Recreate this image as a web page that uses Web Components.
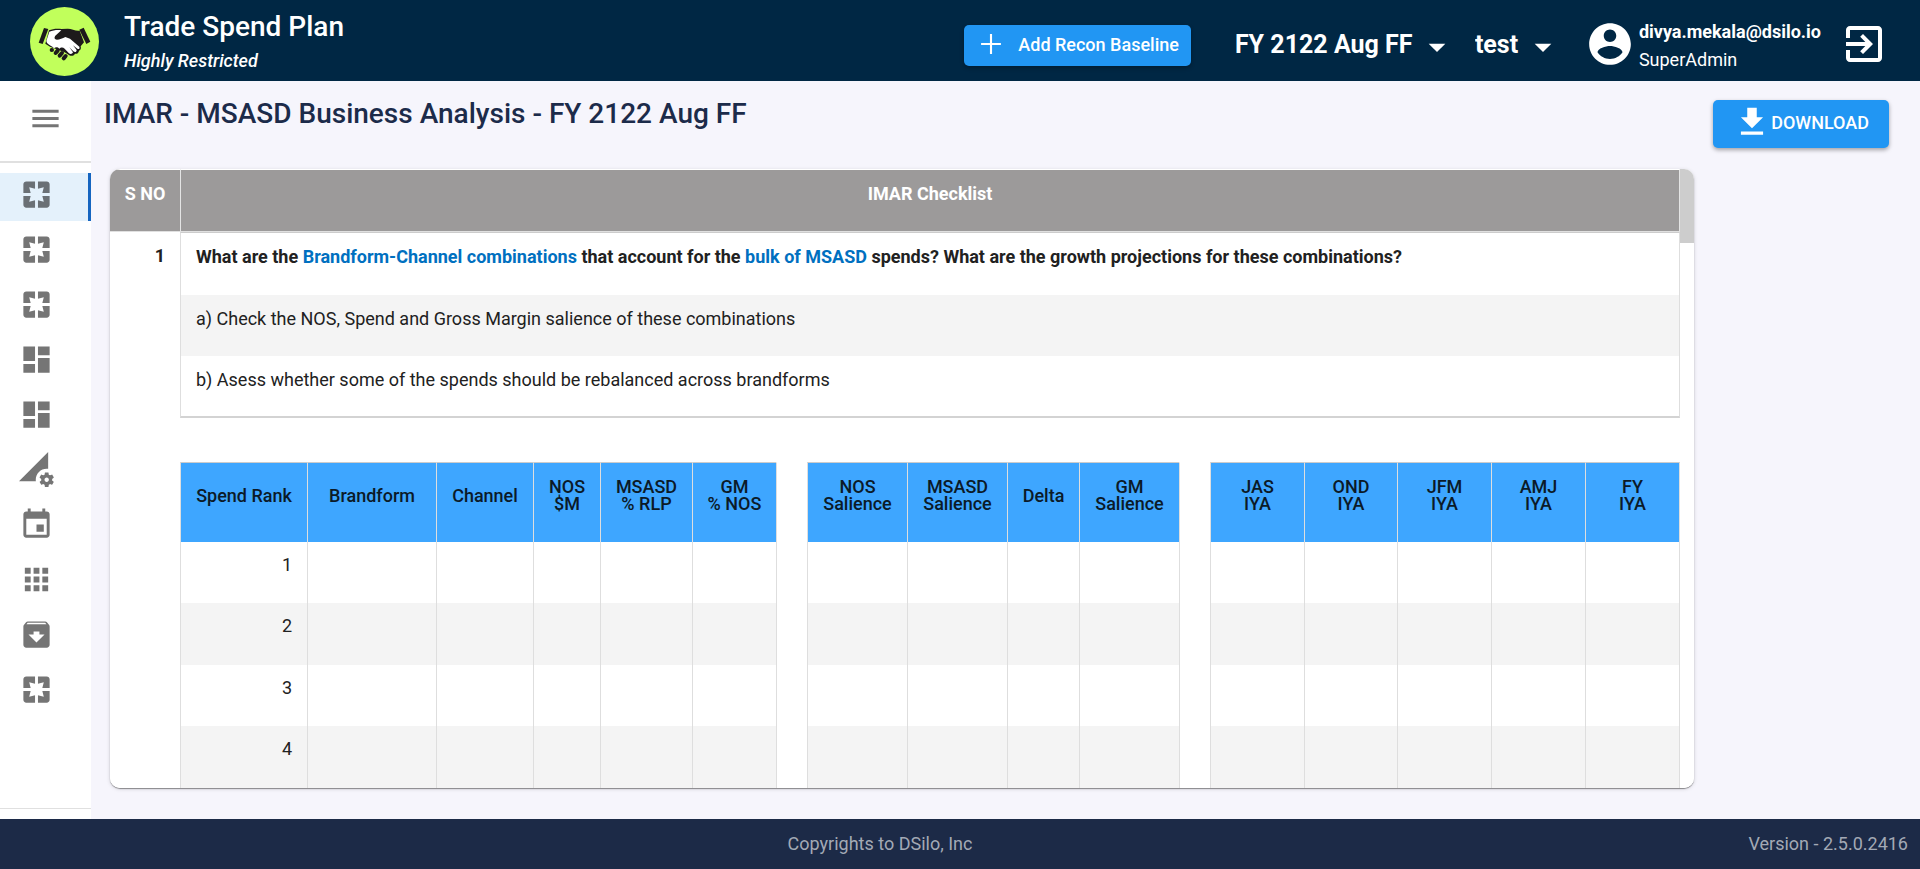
<!DOCTYPE html>
<html lang="en">
<head>
<meta charset="utf-8">
<meta name="viewport" content="width=device-width, initial-scale=1">
<title>Trade Spend Plan</title>
<style>
  html, body { margin: 0; height: 100%; }
  body { font-family: Roboto, "Liberation Sans", sans-serif; font-size: 18px; line-height: 20px; color: #212121; }
</style>
</head>
<body>
<app-shell>
  <app-header slot="header" heading="Trade Spend Plan" note="Highly Restricted"></app-header>
  <side-nav slot="nav"></side-nav>
  <page-bar slot="bar" heading="IMAR - MSASD Business Analysis - FY 2122 Aug FF"></page-bar>
  <scroll-card slot="content"><imar-table></imar-table></scroll-card>
  <app-footer slot="footer">
    <span>Copyrights to DSilo, Inc</span>
    <span slot="end">Version - 2.5.0.2416</span>
  </app-footer>
</app-shell>

<script>
const define = (name, html, setup) => {
  const tpl = document.createElement('template');
  tpl.innerHTML = html;
  customElements.define(name, class extends HTMLElement {
    constructor() {
      super();
      this.attachShadow({ mode: 'open' }).append(tpl.content.cloneNode(true));
    }
    connectedCallback() { if (setup) setup(this, this.shadowRoot); }
  });
};

const ICONS = {
  menu: 'M3 18h18v-2H3v2zm0-5h18v-2H3v2zm0-7v2h18V6H3z',
  pages: 'M3 5v6h5L7 7l4 1V3H5c-1.1 0-2 .9-2 2zm5 8H3v6c0 1.1.9 2 2 2h6v-5l-4 1 1-4zm9 4l-4-1v5h6c1.1 0 2-.9 2-2v-6h-5l1 4zm2-14h-6v5l4-1-1 4h5V5c0-1.1-.9-2-2-2z',
  dashboard: 'M3 13h8V3H3v10zm0 8h8v-6H3v6zm10 0h8V11h-8v10zm0-18v6h8V3h-8z',
  network: 'M18.99 11.5c.34 0 .67.03 1 .07L20 0 0 20h11.56c-.04-.33-.07-.66-.07-1 0-4.14 3.36-7.5 7.5-7.5zm3.71 7.99c.02-.16.04-.32.04-.49 0-.17-.01-.33-.04-.49l1.06-.83c.09-.08.12-.21.06-.32l-1-1.73c-.06-.11-.19-.15-.31-.11l-1.24.5c-.26-.2-.54-.37-.85-.49l-.19-1.32c-.01-.12-.12-.21-.24-.21h-2c-.12 0-.23.09-.25.21l-.19 1.32c-.3.13-.59.29-.85.49l-1.24-.5c-.11-.04-.24 0-.31.11l-1 1.73c-.06.11-.04.24.06.32l1.06.83c-.02.16-.03.32-.03.49 0 .17.01.33.03.49l-1.06.83c-.09.08-.12.21-.06.32l1 1.73c.06.11.19.15.31.11l1.24-.5c.26.2.54.37.85.49l.19 1.32c.02.12.12.21.25.21h2c.12 0 .23-.09.25-.21l.19-1.32c.3-.13.59-.29.84-.49l1.25.5c.11.04.24 0 .31-.11l1-1.73c.06-.11.03-.24-.06-.32l-1.07-.83zm-3.71 1.01c-.83 0-1.5-.67-1.5-1.5s.67-1.5 1.5-1.5 1.5.67 1.5 1.5-.67 1.5-1.5 1.5z',
  event: 'M17 12h-5v5h5v-5zM16 1v2H8V1H6v2H5c-1.11 0-1.99.9-1.99 2L3 19c0 1.1.89 2 2 2h14c1.1 0 2-.9 2-2V5c0-1.1-.9-2-2-2h-1V1h-2zm3 18H5V8h14v11z',
  apps: 'M4 8h4V4H4v4zm6 12h4v-4h-4v4zm-6 0h4v-4H4v4zm0-6h4v-4H4v4zm6 0h4v-4h-4v4zm6-10v4h4V4h-4zm-6 4h4V4h-4v4zm6 6h4v-4h-4v4zm0 6h4v-4h-4v4z',
  archive: 'M20.54 5.23l-1.39-1.68C18.88 3.21 18.47 3 18 3H6c-.47 0-.88.21-1.16.55L3.46 5.23C3.17 5.57 3 6.02 3 6.5V19c0 1.1.9 2 2 2h14c1.1 0 2-.9 2-2V6.5c0-.48-.17-.93-.46-1.27zM12 17.5L6.5 12H10v-2h4v2h3.5L12 17.5zM5.12 5l.81-1h12l.94 1H5.12z',
  plus: 'M19 12.75h-6.25V19h-1.5v-6.25H5v-1.5h6.25V5h1.5v6.25H19z',
  download: 'M19 9h-4V3H9v6H5l7 7 7-7zM5 18v2h14v-2H5z',
  account: 'M12 2C6.48 2 2 6.48 2 12s4.48 10 10 10 10-4.48 10-10S17.52 2 12 2zm0 3c1.66 0 3 1.34 3 3s-1.34 3-3 3-3-1.34-3-3 1.34-3 3-3zm0 14.2c-2.5 0-4.71-1.28-6-3.22.03-1.99 4-3.08 6-3.08 1.99 0 5.97 1.09 6 3.08-1.29 1.94-3.5 3.22-6 3.22z',
  exit: 'M10.09 15.59L11.5 17l5-5-5-5-1.41 1.41L12.67 11H3v2h9.67l-2.58 2.59zM19 3H5c-1.11 0-2 .9-2 2v4h2V5h14v14H5v-4H3v4c0 1.1.89 2 2 2h14c1.1 0 2-.9 2-2V5c0-1.1-.9-2-2-2z',
  caret: 'M7 10l5 5 5-5z'
};

define('mat-icon', `
  <style>
    :host { display: block; flex: none; width: var(--icon-size, 35px); height: var(--icon-size, 35px); }
    svg { display: block; width: 100%; height: 100%; fill: currentColor; }
  </style>
  <svg viewBox="0 0 24 24" aria-hidden="true"><path/></svg>`,
  (el, root) => root.querySelector('path').setAttribute('d', ICONS[el.getAttribute('name')]));

define('brand-logo', `
  <style>
    :host { display: block; flex: none; width: 69px; height: 69px; }
    svg { display: block; width: 100%; height: 100%; }
  </style>
  <svg viewBox="0 0 207 207" role="img" aria-label="Handshake">
    <circle cx="103.500" cy="103.500" r="103.500" fill="#c1ff5b"/>
    <g fill="#1d1a1b">
      <path d="M42 63l13 3-17 45-12-4z"/>
      <path d="M148 68l13-6 20 42-12 7z"/>
      <path d="M57 70C68 66 78 64 95 66L112 65C124 64 138 74 149 71L162 106L152 118C154 124 152 130 147 131C146 138 141 142 135 140C131 147 124 148 118 145L104 136L60 119L46 110Z"/>
      <g stroke="#1d1a1b" stroke-width="12" stroke-linecap="round">
        <path d="M65 129h1M77 138l6-7M89 146l7-8M101 154l6-7"/>
      </g>
    </g>
    <path fill="#fff" d="M58 74C70 70 82 68 94 70L76 86C72 92 73 97 81 98C89 98 98 94 106 90L120 95L148 119C150 124 147 128 142 125L129 115L140 129C140 135 135 137 130 133L118 121L129 136C126 143 120 142 116 138L104 125C98 119 92 121 88 125C82 119 77 120 72 124C66 116 58 116 51 108L49 102Z"/>
  </svg>`);

define('pick-list', `
  <style>
    :host { display: flex; align-items: center; color: #fff; }
    select { appearance: none; border: 0; margin: 0; padding: 0 40px 0 0; background: none; color: inherit;
             font: 700 25px/32px Roboto, sans-serif; cursor: pointer; }
    option { color: #212121; }
    mat-icon { --icon-size: 40px; margin: 4px -12px 0 -36px; pointer-events: none; }
  </style>
  <select></select><mat-icon name="caret"></mat-icon>`,
  (el, root) => {
    const sel = root.querySelector('select');
    sel.setAttribute('aria-label', el.getAttribute('label'));
    sel.add(new Option(el.getAttribute('value')));
  });

define('app-header', `
  <style>
    :host { display: flex; align-items: center; justify-content: space-between; box-sizing: border-box;
            height: 81px; padding: 0 32px 0 30px; background: #002744; color: #fff; }
    .brand, .tools, .user { display: flex; align-items: center; }
    .brand { gap: 25px; padding-top: 2px; }
    h1 { margin: 0; font-size: 28px; line-height: 36px; font-weight: 500; }
    p { margin: 2px 0 0; font-style: italic; font-weight: 500; line-height: 28px; }
    .add { display: flex; align-items: center; gap: 10px; height: 41px; padding: 0 12px 2px 10px; border: 0; border-radius: 5px;
           margin: 10px 44px 0 0; background: #2196f3; color: #fff; font: 500 18px/20px Roboto, sans-serif;
           box-shadow: 0 2px 4px rgba(0,0,0,.3); cursor: pointer; }
    .add mat-icon { --icon-size: 34px; margin-bottom: 2px; }
    pick-list { margin: 8px 30px 0 0; }
    .user { --icon-size: 50px; gap: 4px; margin: 6px 19px 0 4px; }
    .user div { padding-top: 4px; }
    .user b, .user span { display: block; line-height: 28px; }
    .out { --icon-size: 48px; padding: 0; border: 0; margin-top: 6px; background: none; color: inherit; cursor: pointer; }
  </style>
  <div class="brand">
    <brand-logo></brand-logo>
    <div><h1></h1><p></p></div>
  </div>
  <div class="tools">
    <button class="add" type="button"><mat-icon name="plus"></mat-icon>Add Recon Baseline</button>
    <pick-list label="Plan" value="FY 2122 Aug FF"></pick-list>
    <pick-list label="Scenario" value="test"></pick-list>
    <div class="user"><mat-icon name="account"></mat-icon><div><b>divya.mekala@dsilo.io</b><span>SuperAdmin</span></div></div>
    <button class="out" type="button" aria-label="Sign out"><mat-icon name="exit"></mat-icon></button>
  </div>`,
  (el, root) => {
    root.querySelector('h1').textContent = el.getAttribute('heading');
    root.querySelector('p').textContent = el.getAttribute('note');
  });

define('side-nav', `
  <style>
    :host { display: flex; flex-direction: column; box-sizing: border-box; height: 100%; background: #fff; color: #757575; }
    .menu { display: flex; align-items: center; justify-content: center; box-sizing: content-box; height: 74px; padding: 0 0 6px;
            border: 0; border-bottom: 2px solid #e0e0e0; background: none; color: inherit; cursor: pointer; }
    nav { display: flex; flex-direction: column; gap: 7px; padding-top: 10px; flex: 1; border-bottom: 1px solid #e0e0e0; margin-bottom: 10px; }
    a { display: flex; align-items: center; box-sizing: border-box; height: 48px; padding: 0 0 5px 19px; color: inherit; }
    a.on { background: #e4f1fb; border-right: 3px solid #1565c0; color: #6a7075; }
  </style>
  <button class="menu" type="button" aria-label="Menu"><mat-icon name="menu"></mat-icon></button>
  <nav aria-label="Sections"></nav>`,
  (el, root) => {
    const items = ['pages', 'pages', 'pages', 'dashboard', 'dashboard', 'network', 'event', 'apps', 'archive', 'pages'];
    root.querySelector('nav').innerHTML = items.map((n, i) =>
      `<a href="#s${i + 1}" class="${i ? '' : 'on'}" aria-label="Section ${i + 1}"><mat-icon name="${n}"></mat-icon></a>`).join('');
  });

define('page-bar', `
  <style>
    :host { display: flex; align-items: flex-start; justify-content: space-between; padding: 15px 31px 21px 13px; }
    h2 { margin: 0; font-size: 28px; line-height: 36px; font-weight: 500; color: #1c2b4a; }
    button { display: flex; align-items: center; height: 48px; margin-top: 4px; padding: 0 20px 2px; border: 0; border-radius: 5px;
             background: #2196f3; color: #fff; font: 500 18px/20px Roboto, sans-serif; box-shadow: 0 2px 4px rgba(0,0,0,.35); cursor: pointer; }
    mat-icon { --icon-size: 38px; margin-bottom: 2px; }
  </style>
  <h2></h2>
  <button type="button"><mat-icon name="download"></mat-icon>DOWNLOAD</button>`,
  (el, root) => { root.querySelector('h2').textContent = el.getAttribute('heading'); });

define('scroll-card', `
  <style>
    :host { display: flex; min-height: 0; margin: 0 226px 31px 19px; overflow: hidden; border-radius: 10px; background: #fff;
            box-shadow: 0 1px 1px rgba(0,0,0,.4), 0 1px 4px rgba(0,0,0,.14); }
    .view { flex: 1; min-width: 0; overflow: auto; scrollbar-width: none; }
    .track { width: 14px; background: #fff; }
    .thumb { height: 12%; background: #cdcdcd; }
  </style>
  <div class="view"><slot></slot></div>
  <div class="track"><div class="thumb"></div></div>`);

define('imar-table', `
  <style>
    :host { display: block; --line: #dedede; }
    table { width: 100%; table-layout: fixed; border-collapse: separate; border-spacing: 0; }
    th, td { box-sizing: border-box; padding: 14px 15px 0; vertical-align: top; text-align: left; line-height: 20px; font-weight: 400; }
    .top th { height: 63px; padding: 14px 0 0; border-top: 1px solid #fff; border-bottom: 1px solid #e0e0e0; background: #9c9a9a; color: #fff;
              font-weight: 700; text-align: center; white-space: nowrap; }
    .q { height: 61px; border-left: 1px solid var(--line); border-right: 1px solid var(--line); }
    th.q { height: 63px; border-top: 1px solid #ccc; font-weight: 700; }
    .q span { color: #0070c0; }
    .alt { background: #f4f4f4; }
    td.end { height: 62px; border-bottom: 2px solid #d3d3d3; }
    .no { text-align: right; font-weight: 700; }
    .gap td { height: 44px; }
    .cols th { height: 80px; padding: 0 0 15px; vertical-align: middle; text-align: center; line-height: 17px; font-weight: 500;
               background: #3ea6ff; color: #0b1a28; border-top: 1px solid #ccc; }
    .cols th, .row td, .row th { border-left: 1px solid var(--line); }
    .row td, .row th { height: 61px; padding-top: 13px; }
    .row:nth-child(odd) td { height: 62px; }
    .row th { text-align: right; }
    .cols .blank, .row .blank { background: #fff; border-top-color: transparent; }
    .cols .lead, .row .lead { background: #fff; border: 0; }
    tr > .last { border-right: 1px solid var(--line); }
    .top th + th { border-left: 1px solid #e4e4e4; border-right: 1px solid #e4e4e4; }
  </style>
  <table>
    <colgroup></colgroup>
    <thead><tr class="top"><th scope="col">S NO</th><th scope="col" colspan="17">IMAR Checklist</th></tr></thead>
    <tbody>
      <tr><td class="no" rowspan="3">1</td><th class="q" colspan="17">What are the <span>Brandform-Channel combinations</span> that account for the <span>bulk of MSASD</span> spends? What are the growth projections for these combinations?</th></tr>
      <tr><td class="q alt" colspan="17">a) Check the NOS, Spend and Gross Margin salience of these combinations</td></tr>
      <tr><td class="q end" colspan="17">b) Asess whether some of the spends should be rebalanced across brandforms</td></tr>
      <tr class="gap"><td colspan="18"></td></tr>
    </tbody>
    <tbody class="data"></tbody>
  </table>`,
  (el, root) => {
    // Column weights; an empty label is the gutter between two groups.
    const cols = [['Spend Rank', 127], ['Brandform', 129], ['Channel', 97], ['NOS<br>$M', 67], ['MSASD<br>% RLP', 92], ['GM<br>% NOS', 84],
      ['', 31], ['NOS<br>Salience', 100], ['MSASD<br>Salience', 100], ['Delta', 72], ['GM<br>Salience', 100],
      ['', 31], ['JAS<br>IYA', 94], ['OND<br>IYA', 93], ['JFM<br>IYA', 94], ['AMJ<br>IYA', 94], ['FY<br>IYA', 95]];
    const last = cols.length - 1;
    const cls = (c, i, alt) => c[0] ? (alt ? 'alt ' : '') + (i === last ? 'last' : '') : 'blank';
    root.querySelector('colgroup').innerHTML = [['', 70], ...cols].map(c => `<col style="width:${c[1]}px">`).join('');
    const head = `<tr class="cols"><td class="lead"></td>${cols.map((c, i) =>
      c[0] ? `<th scope="col" class="${cls(c, i)}">${c[0]}</th>` : '<th class="blank"></th>').join('')}</tr>`;
    const rows = [1, 2, 3, 4].map(n => `<tr class="row"><td class="lead"></td>${cols.map((c, i) =>
      i ? `<td class="${cls(c, i, n % 2 === 0)}"></td>` : `<th scope="row" class="${cls(c, i, n % 2 === 0)}">${n}</th>`).join('')}</tr>`);
    root.querySelector('.data').innerHTML = head + rows.join('');
  });

define('app-footer', `
  <style>
    :host { display: grid; grid-template-columns: 1fr auto 1fr; align-items: center; height: 50px; padding: 0 12px;
            background: #1c2a47; color: #a3a9b5; }
    .mid { grid-column: 2; margin-right: 160px; }
    .end { text-align: right; }
  </style>
  <div class="mid"><slot></slot></div><div class="end"><slot name="end"></slot></div>`);

define('app-shell', `
  <style>
    :host { display: grid; grid-template: "header header" auto "nav main" 1fr "footer footer" auto / 91px 1fr; height: 100vh; background: #f6f5fc; }
    header { grid-area: header; }
    aside { grid-area: nav; min-height: 0; }
    main { grid-area: main; display: flex; flex-direction: column; min-width: 0; min-height: 0; }
    ::slotted(scroll-card) { flex: 1; }
    footer { grid-area: footer; }
  </style>
  <header><slot name="header"></slot></header>
  <aside><slot name="nav"></slot></aside>
  <main><slot name="bar"></slot><slot name="content"></slot></main>
  <footer><slot name="footer"></slot></footer>`);
</script>
</body>
</html>
